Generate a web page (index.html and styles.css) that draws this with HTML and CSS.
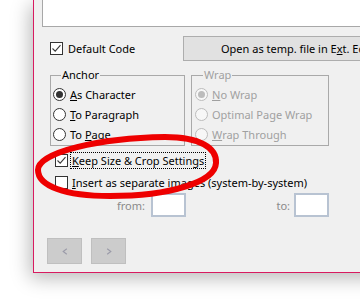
FILE: index.html
```html
<!DOCTYPE html>
<html>
<head>
<meta charset="utf-8">
<link rel="stylesheet" href="styles.css">
</head>
<body>
<div class="window">
  <div class="editor"></div>
  <div class="row1">
    <label class="check default">
      <span class="box"><svg width="11" height="11" viewBox="0 0 11 11"><polyline points="1.5,5.5 4.2,8.2 9.5,2.2" fill="none" stroke="#3a3a3a" stroke-width="1.1"/></svg></span>
      <span>Default Code</span>
    </label>
    <button class="ext">Open as temp. file in E<u>x</u>t. Editor</button>
  </div>
  <div class="groups">
    <fieldset class="group anchor">
      <legend>Anchor</legend>
      <div class="radio"><span class="rb on"></span><span><u>A</u>s Character</span></div>
      <div class="radio"><span class="rb"></span><span><u>T</u>o Paragraph</span></div>
      <div class="radio"><span class="rb"></span><span>To <u>P</u>age</span></div>
    </fieldset>
    <fieldset class="group wrap disabled">
      <legend>Wrap</legend>
      <div class="radio"><span class="rb on"></span><span><u>N</u>o Wrap</span></div>
      <div class="radio"><span class="rb"></span><span>Optimal Page Wrap</span></div>
      <div class="radio"><span class="rb"></span><span><u>W</u>rap Through</span></div>
    </fieldset>
  </div>
  <div class="opts">
    <label class="check opt">
      <span class="box"><svg width="11" height="11" viewBox="0 0 11 11"><polyline points="1.5,5.5 4.2,8.2 9.5,2.2" fill="none" stroke="#3a3a3a" stroke-width="1.1"/></svg></span>
      <span class="focus"><u>K</u>eep Size &amp; Crop Settings</span>
    </label>
    <label class="check opt">
      <span class="box"></span>
      <span class="lbl"><u>I</u>nsert as separate images (system-by-system)</span>
    </label>
  </div>
  <div class="range">
    <span class="rlabel from">from:</span>
    <span class="field"></span>
    <span class="rlabel to">to:</span>
    <span class="field"></span>
  </div>
  <div class="nav">
    <button class="navbtn"><svg width="6" height="7" viewBox="0 0 6 7"><polyline points="4.8,0.8 1.2,3.5 4.8,6.2" fill="none" stroke="#9a9aa8" stroke-width="1.1"/></svg></button>
    <button class="navbtn"><svg width="6" height="7" viewBox="0 0 6 7"><polyline points="1.2,0.8 4.8,3.5 1.2,6.2" fill="none" stroke="#9a9aa8" stroke-width="1.1"/></svg></button>
  </div>
</div>
<svg class="annot" width="360" height="304" viewBox="0 0 360 304">
  <path d="M38 170 C38 152 100 138 165 137 C200 137 217 148 216 163 C215 182 170 196 110 196 C65 196 38 186 38 170 Z" fill="none" stroke="#ee0000" stroke-width="6"/>
</svg>
</body>
</html>
```
FILE: styles.css
```css
html, body {
  margin: 0;
  padding: 0;
}
body {
  width: 360px;
  height: 304px;
  overflow: hidden;
  background: #ffffff;
  position: relative;
  font-family: "Noto Sans", "Open Sans", sans-serif;
  font-size: 11px;
  color: #000;
}
u { text-decoration: underline; text-underline-offset: 1px; }

.window {
  margin-left: 33px;
  width: 400px;
  height: 272px;
  background: #f0f0f0;
  border-left: 1px solid #d81b60;
  border-bottom: 1px solid #d81b60;
  box-shadow: -3px 5px 18px rgba(0, 0, 0, 0.28);
  display: flex;
  flex-direction: column;
}

.editor {
  margin-left: 8px;
  height: 26px;
  background: #ffffff;
  border-left: 1px solid #a8a8a8;
  border-bottom: 1px solid #a8a8a8;
}

.row1 {
  display: flex;
  align-items: center;
  margin-top: 9px;
  height: 25px;
}
.check {
  display: flex;
  align-items: center;
  gap: 5px;
  line-height: 15px;
}
.default {
  margin-left: 16px;
  width: 133px;
  flex: none;
}
.box {
  width: 13px;
  height: 13px;
  box-sizing: border-box;
  border: 1px solid #333333;
  background: #ffffff;
  display: flex;
  align-items: center;
  justify-content: center;
  flex: none;
}
.box svg { display: block; }

.ext {
  height: 25px;
  width: 260px;
  flex: none;
  box-sizing: border-box;
  border: 1px solid #adadad;
  background: #e1e1e1;
  font: inherit;
  color: #000;
  text-align: left;
  padding: 0 0 0 37px;
  margin: 0;
  white-space: nowrap;
}

.groups {
  display: flex;
  gap: 6px;
  margin-left: 16px;
  margin-top: 6px;
}
.group {
  box-sizing: border-box;
  margin: 0;
  border: 1px solid #a9a9a9;
  padding: 1px 0 1px 2px;
  min-width: 0;
}
.anchor { width: 135px; }
.wrap { width: 138px; padding-left: 3px; }
legend {
  padding: 0 1px;
  margin-left: 8px;
  line-height: 16px;
}
.radio {
  display: flex;
  align-items: center;
  gap: 4px;
  height: 20px;
  line-height: 15px;
}
.rb {
  width: 13px;
  height: 13px;
  box-sizing: border-box;
  border: 1px solid #333333;
  border-radius: 50%;
  background: #ffffff;
  display: flex;
  align-items: center;
  justify-content: center;
  flex: none;
}
.rb.on::after {
  content: "";
  width: 7px;
  height: 7px;
  border-radius: 50%;
  background: #333333;
}
.disabled legend,
.disabled .radio { color: #a0a0a0; }
.disabled .rb { border-color: #bcbcbc; background: #f7f7f7; }
.disabled .rb.on::after { background: #bcbcbc; }

.opts {
  margin-left: 21px;
  padding-top: 8px;
  display: flex;
  flex-direction: column;
  gap: 9px;
}
.opt {
  height: 13px;
  gap: 3px;
}
.focus {
  outline: 1px dotted #000;
  outline-offset: 0;
  padding: 0 1px;
}
.lbl { padding-left: 1px; }

.range {
  display: flex;
  align-items: center;
  margin-top: 4px;
  height: 24px;
}
.rlabel {
  color: #8a8a8a;
  text-align: right;
  flex: none;
}
.from { width: 111px; margin-right: 6px; }
.to { width: 104px; margin-right: 4px; }
.field {
  width: 35px;
  height: 24px;
  box-sizing: border-box;
  border: 2px solid #b8c3d2;
  background: #ffffff;
  flex: none;
}

.nav {
  display: flex;
  gap: 9px;
  margin-left: 13px;
  margin-top: 21px;
}
.navbtn {
  width: 35px;
  height: 26px;
  box-sizing: border-box;
  border: 1px solid #bfbfbf;
  background: #cccccc;
  padding: 0;
  margin: 0;
  display: flex;
  align-items: center;
  justify-content: center;
}

.annot {
  position: absolute;
  left: 0;
  top: 0;
  pointer-events: none;
}
```
